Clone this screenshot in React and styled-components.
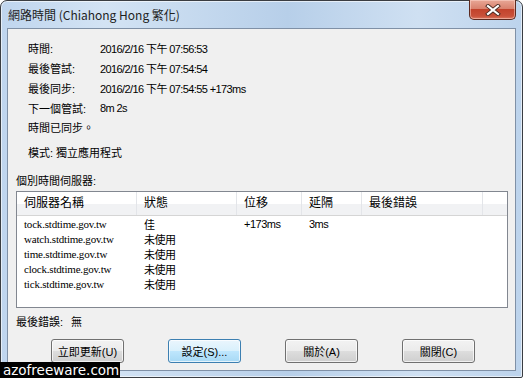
import styled, { createGlobalStyle } from 'styled-components'

const Global = createGlobalStyle`
  html, body { margin: 0; padding: 0; background: #ffffff; }
  #root { width: 523px; height: 378px; position: relative; overflow: hidden; }
`

const ui = `"Liberation Sans", "Noto Sans CJK TC", sans-serif`

const info = [
  ['時間:', '2016/2/16 下午 07:56:53'],
  ['最後管試:', '2016/2/16 下午 07:54:54'],
  ['最後同步:', '2016/2/16 下午 07:54:55 +173ms'],
  ['下一個管試:', '8m 2s'],
]

const columns = [
  { title: '伺服器名稱', width: 120 },
  { title: '狀態', width: 100 },
  { title: '位移', width: 65 },
  { title: '延隔', width: 60 },
  { title: '最後錯誤', width: 121 },
]

const servers = [
  ['tock.stdtime.gov.tw', '佳', '+173ms', '3ms', ''],
  ['watch.stdtime.gov.tw', '未使用', '', '', ''],
  ['time.stdtime.gov.tw', '未使用', '', '', ''],
  ['clock.stdtime.gov.tw', '未使用', '', '', ''],
  ['tick.stdtime.gov.tw', '未使用', '', '', ''],
]

const buttons = [
  { label: '立即更新(U)' },
  { label: '設定(S)...', focused: true },
  { label: '關於(A)' },
  { label: '關閉(C)' },
]

const App = () => {
  return (
    <>
      <Global />
      <Window>
        <TitleBar>
          <Title>網路時間 (Chiahong Hong 繁化)</Title>
          <CloseButton>
            <svg width="16" height="12" viewBox="0 0 16 12">
              <path d="M3 2 L13 10 M13 2 L3 10" stroke="#4a2a22" strokeWidth="4" strokeLinecap="square" />
              <path d="M3 2 L13 10 M13 2 L3 10" stroke="#ffffff" strokeWidth="2.2" strokeLinecap="square" />
            </svg>
          </CloseButton>
        </TitleBar>

        <Client>
          <InfoGrid>
            {info.map(([label, value]) => (
              <InfoRow key={label}>
                <Label>{label}</Label>
                <Value>{value}</Value>
              </InfoRow>
            ))}
            <Line>時間已同步。</Line>
          </InfoGrid>
          <Mode>模式: 獨立應用程式</Mode>
          <Section>個別時間伺服器:</Section>

          <ListView>
            <HeaderRow>
              {columns.map((c) => (
                <HeaderCell key={c.title} $w={c.width}>{c.title}</HeaderCell>
              ))}
              <HeaderCell $fill />
            </HeaderRow>
            <Rows>
              {servers.map((row) => (
                <Row key={row[0]}>
                  {row.map((cell, i) => (
                    <Cell key={i} $w={columns[i].width} $serif={i === 0}>{cell}</Cell>
                  ))}
                </Row>
              ))}
            </Rows>
          </ListView>

          <LastError>
            <span>最後錯誤:</span>
            <span>無</span>
          </LastError>

          <ButtonBar>
            {buttons.map((b) => (
              <Button key={b.label} $focused={b.focused}>{b.label}</Button>
            ))}
          </ButtonBar>
        </Client>
      </Window>
      <Watermark>azofreeware.com</Watermark>
    </>
  )
}

const Window = styled.div`
  box-sizing: border-box;
  width: 523px;
  height: 378px;
  display: flex;
  flex-direction: column;
  border: 1px solid #3a3d42;
  border-radius: 7px 7px 2px 2px;
  background: linear-gradient(90deg, #bfd5ee 0%, #d3e3f4 20%, #b7cfe9 55%, #cfe0f2 80%, #bcd3ec 100%);
  box-shadow: inset 0 0 0 1px rgba(255, 255, 255, 0.6);
`

const TitleBar = styled.div`
  height: 27px;
  display: flex;
  justify-content: space-between;
  align-items: flex-start;
  padding-left: 7px;
  padding-right: 6px;
`

const Title = styled.div`
  font-family: "Noto Sans CJK TC", "Liberation Sans", sans-serif;
  font-size: 12px;
  line-height: 28px;
  color: #1e1e1e;
`

const CloseButton = styled.div`
  box-sizing: border-box;
  width: 47px;
  height: 20px;
  margin-top: -1px;
  display: flex;
  align-items: center;
  justify-content: center;
  border: 1px solid #5c2a20;
  border-top: none;
  border-radius: 0 0 5px 5px;
  background: linear-gradient(180deg, #e8a796 0%, #d9826e 45%, #c2432c 50%, #c9513a 85%, #dc7a62 100%);
  box-shadow: inset 0 0 0 1px rgba(255, 220, 210, 0.5);
`

const Client = styled.div`
  box-sizing: border-box;
  flex: 1;
  margin: 0 6px 6px 6px;
  border: 1px solid #7f90a6;
  background: #f0f0f0;
  display: flex;
  flex-direction: column;
  padding: 9px 7px 7px 8px;
  font-family: ${ui};
  font-size: 11px;
  color: #000;
`

const InfoGrid = styled.div`
  display: flex;
  flex-direction: column;
  padding-left: 12px;
`

const InfoRow = styled.div`
  display: grid;
  grid-template-columns: 72px 1fr;
  height: 20px;
  align-items: center;
`

const Label = styled.span``

const Value = styled.span`
  letter-spacing: -0.6px;
`

const Line = styled.div`
  height: 20px;
  line-height: 20px;
`

const Mode = styled.div`
  padding-left: 12px;
  margin-top: 5px;
  height: 20px;
  line-height: 20px;
`

const Section = styled.div`
  margin-top: 8px;
  height: 20px;
  line-height: 20px;
`

const ListView = styled.div`
  box-sizing: border-box;
  height: 117px;
  border: 1px solid #828790;
  background: #ffffff;
  display: flex;
  flex-direction: column;
`

const HeaderRow = styled.div`
  display: flex;
  height: 23px;
  border-bottom: 1px solid #d5d5d5;
  background: linear-gradient(180deg, #ffffff 0%, #ffffff 50%, #f1f2f4 51%, #f1f2f4 100%);
`

const HeaderCell = styled.div`
  box-sizing: border-box;
  ${(p) => (p.$fill ? 'flex: 1;' : `width: ${p.$w}px;`)}
  padding-left: 7px;
  line-height: 23px;
  font-size: 12px;
  border-right: ${(p) => (p.$fill ? 'none' : '1px solid #e3e5e9')};
`

const Rows = styled.div`
  padding-top: 0;
`

const Row = styled.div`
  display: flex;
  height: 15px;
  align-items: center;
`

const Cell = styled.div`
  box-sizing: border-box;
  width: ${(p) => p.$w}px;
  padding-left: 7px;
  white-space: nowrap;
  font-family: ${(p) => (p.$serif ? `"Liberation Serif", "Noto Sans CJK TC", serif` : ui)};
  font-size: 11px;
  letter-spacing: ${(p) => (p.$serif ? '-0.2px' : '-0.5px')};
`

const LastError = styled.div`
  display: flex;
  gap: 8px;
  height: 20px;
  line-height: 20px;
  margin-top: 4px;
`

const ButtonBar = styled.div`
  display: flex;
  gap: 44px;
  padding-left: 35px;
  margin-top: auto;
`

const Button = styled.div`
  box-sizing: border-box;
  width: 73px;
  height: 24px;
  display: flex;
  align-items: center;
  justify-content: center;
  border: 1px solid ${(p) => (p.$focused ? '#3c7fb1' : '#707070')};
  border-radius: 3px;
  font-size: 11px;
  background: ${(p) =>
    p.$focused
      ? 'linear-gradient(180deg, #eaf6fd 0%, #d9f0fc 50%, #bee6fd 51%, #a7d9f5 100%)'
      : 'linear-gradient(180deg, #f2f2f2 0%, #ebebeb 50%, #dddddd 51%, #cfcfcf 100%)'};
  box-shadow: inset 0 0 0 1px rgba(255, 255, 255, 0.7);
`

const Watermark = styled.div`
  position: absolute;
  left: 0;
  bottom: 0;
  width: 120px;
  height: 16px;
  background: #000;
  color: #fff;
  font-family: "DejaVu Sans", sans-serif;
  font-size: 13.5px;
  line-height: 16px;
  padding-left: 3px;
  box-sizing: border-box;
`

export default App
